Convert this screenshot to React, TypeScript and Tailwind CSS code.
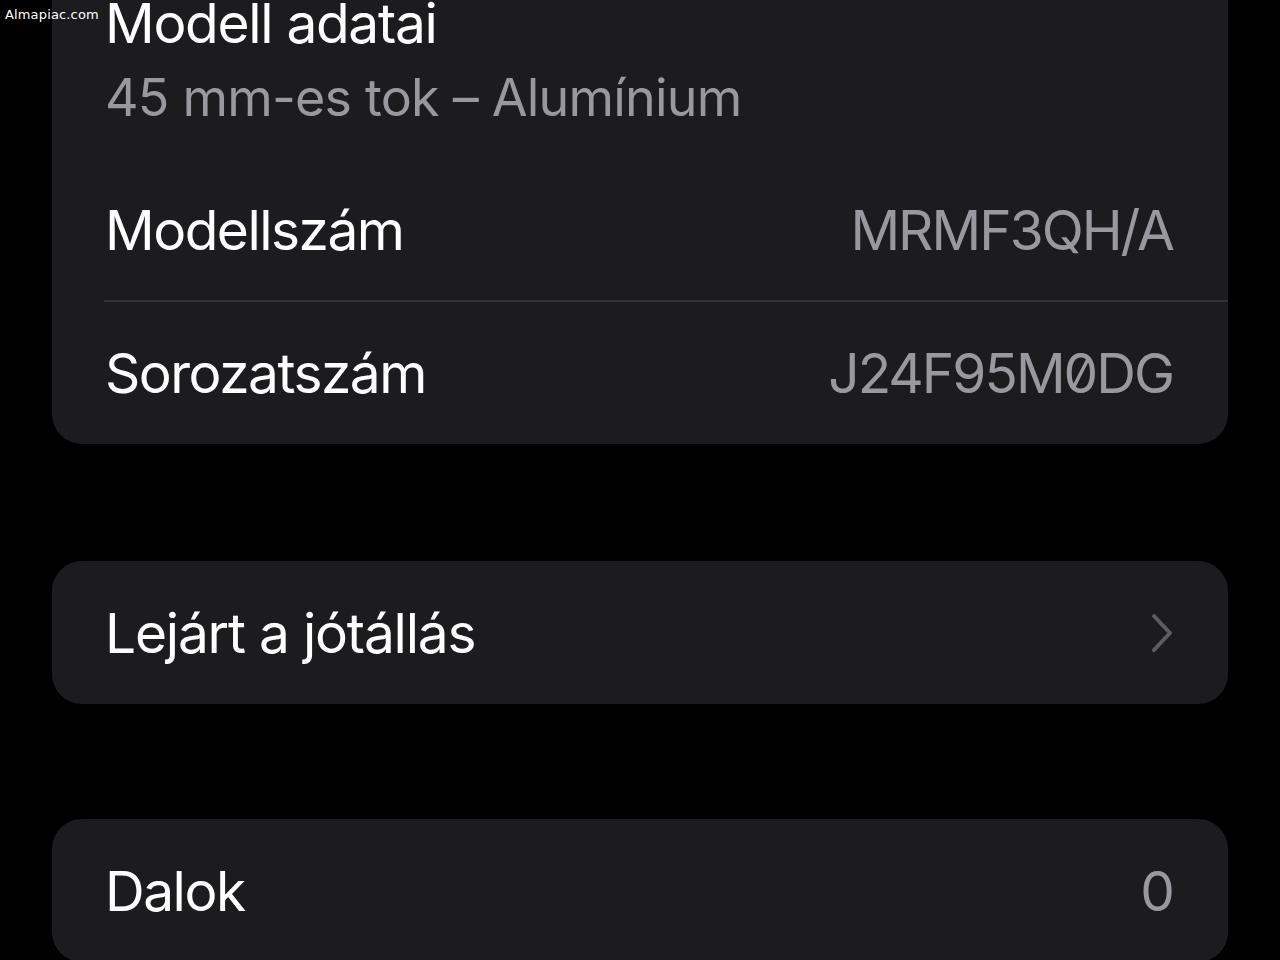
type Row = {
  label: string;
  value?: string;
  slashedZero?: boolean;
};

const modelRows: Row[] = [
  { label: "Modellszám", value: "MRMF3QH/A" },
  { label: "Sorozatszám", value: "J24F95M0DG", slashedZero: true },
];

function Chevron() {
  return (
    <svg width="22" height="40" viewBox="0 0 22 40" fill="none">
      <polyline
        points="3,3 19,20 3,37"
        stroke="#5c5c61"
        strokeWidth="4"
        strokeLinecap="round"
        strokeLinejoin="round"
      />
    </svg>
  );
}

function ValueRow({ row, last }: { row: Row; last?: boolean }) {
  return (
    <div className="ml-[52px]">
      <div
        className={`flex h-[142px] items-center justify-between pl-[1px] pr-[55px] ${
          last ? "" : "border-b-2 border-[#323236]"
        }`}
      >
        <span className="text-[55px] leading-[66px] tracking-[-1.5px] text-white">{row.label}</span>
        {row.value && (
          <span
            className={`text-[55px] leading-[66px] tracking-[-2px] text-[#98989e] ${
              row.slashedZero ? "[font-feature-settings:'zero']" : ""
            }`}
          >
            {row.value}
          </span>
        )}
      </div>
    </div>
  );
}

export default function App() {
  return (
    <div className="relative h-[960px] w-full overflow-hidden bg-black font-['Inter','Noto_Sans',sans-serif]">
      <div className="px-[52px]">
        <section className="-mt-[40px] rounded-[30px] bg-[#1c1c1e]">
          <div className="flex flex-col pb-[31px] pl-[53px] pr-[55px] pt-[30px]">
            <span className="text-[55px] leading-[66px] tracking-[-1.3px] text-white">Modell adatai</span>
            <span className="mt-[11px] text-[52px] leading-[62px] tracking-[-0.8px] text-[#98989e]">
              45 mm-es tok – Alumínium
            </span>
          </div>
          <ValueRow row={modelRows[0]} />
          <ValueRow row={modelRows[1]} last />
        </section>

        <section className="mt-[117px] rounded-[30px] bg-[#1c1c1e]">
          <div className="flex h-[143px] items-center justify-between pl-[53px] pr-[55px]">
            <span className="text-[55px] leading-[66px] tracking-[-1.2px] text-white">Lejárt a jótállás</span>
            <Chevron />
          </div>
        </section>

        <section className="mt-[115px] rounded-[30px] bg-[#1c1c1e]">
          <div className="flex h-[143px] items-center justify-between pl-[53px] pr-[53px]">
            <span className="text-[55px] leading-[66px] tracking-[-1.5px] text-white">Dalok</span>
            <span className="text-[55px] leading-[66px] text-[#98989e]">0</span>
          </div>
        </section>
      </div>

      <div className="absolute left-[5px] top-[6px] font-['DejaVu_Sans',sans-serif] text-[13px] leading-[18px] tracking-[0.15px] text-white">
        Almapiac.com
      </div>
    </div>
  );
}
